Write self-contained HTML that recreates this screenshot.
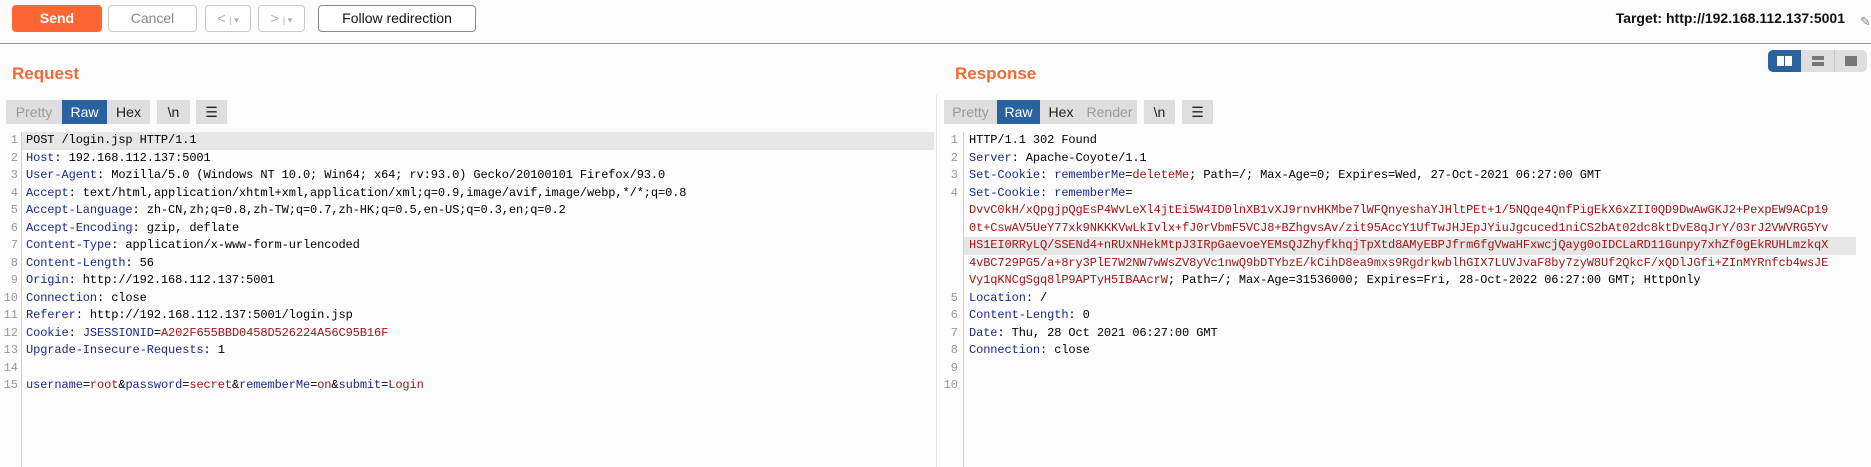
<!DOCTYPE html>
<html><head><meta charset="utf-8"><style>
*{margin:0;padding:0;box-sizing:border-box}
body{width:1871px;height:467px;background:#fcfcfc;font-family:"Liberation Sans",sans-serif;position:relative;overflow:hidden}
.abs{position:absolute}
.btn{position:absolute;top:5px;height:27px;border:1px solid #c9c9c9;border-radius:4px;background:#fff;font-size:14px;color:#888;text-align:center;line-height:25px}
.tabs{position:absolute;top:100px;height:24px;display:flex;font-size:14px}
.tabs div{background:#dedede;color:#999;line-height:24px;text-align:center}
.tabs .on{background:#2a62a0;color:#fff}
.tabs .dk{color:#222}
.code{position:absolute;top:132px;font-family:"Liberation Mono",monospace;font-size:12px;letter-spacing:-0.1px;line-height:17.5px;white-space:pre;color:#000}
.ln{position:absolute;top:132px;font-family:"Liberation Mono",monospace;font-size:12px;line-height:17.5px;white-space:pre;color:#999;text-align:right}
.k{color:#1c2a8a}.v{color:#a31515}
.hl{position:absolute;height:17.5px;background:#e6e6e6}
</style></head><body>
<div class="btn" style="left:12px;width:90px;background:#ff6633;border-color:#ff6633;color:#fff;font-weight:bold">Send</div>
<div class="btn" style="left:108px;width:89px">Cancel</div>
<div class="btn" style="left:205px;width:46px;color:#aaa">&lt; <span style="font-size:9px">| ▾</span></div>
<div class="btn" style="left:258px;width:47px;color:#aaa">&gt; <span style="font-size:9px">| ▾</span></div>
<div class="btn" style="left:318px;width:158px;border-color:#888;color:#111">Follow redirection</div>
<div class="abs" style="right:26px;top:10px;font-size:14px;font-weight:bold;color:#111">Target: http://192.168.112.137:5001</div>
<div class="abs" style="left:1860px;top:14px;font-size:13px;color:#888">✎</div>
<div class="abs" style="left:0;top:43px;width:1871px;height:1px;background:#9a9aa6"></div>
<div class="abs" style="left:1768px;top:50px;width:99px;height:22px;border-radius:5px;background:#dedede;overflow:hidden">
 <div class="abs" style="left:0;top:0;width:33px;height:22px;background:#2a62a0"></div>
 <div class="abs" style="left:9px;top:6px;width:7px;height:10px;background:#fff"></div>
 <div class="abs" style="left:17px;top:6px;width:7px;height:10px;background:#fff"></div>
 <div class="abs" style="left:66px;top:0;width:1px;height:22px;background:#c8c8c8"></div>
 <div class="abs" style="left:44px;top:6px;width:12px;height:4px;background:#777"></div>
 <div class="abs" style="left:44px;top:12px;width:12px;height:4px;background:#777"></div>
 <div class="abs" style="left:77px;top:6px;width:12px;height:10px;background:#777"></div>
</div>
<div class="abs" style="left:12px;top:64px;font-size:17px;font-weight:bold;color:#f26a36">Request</div>
<div class="abs" style="left:955px;top:64px;font-size:17px;font-weight:bold;color:#f26a36">Response</div>
<div class="tabs" style="left:6px"><div style="width:56px">Pretty</div><div class="on" style="width:45px">Raw</div><div class="dk" style="width:43px">Hex</div><div class="dk" style="width:33px;margin-left:7px">\n</div><div class="dk" style="width:31px;margin-left:6px">☰</div></div>
<div class="tabs" style="left:944px"><div style="width:53px">Pretty</div><div class="on" style="width:43px">Raw</div><div class="dk" style="width:42px">Hex</div><div style="width:55px">Render</div><div class="dk" style="width:31px;margin-left:7px">\n</div><div class="dk" style="width:31px;margin-left:7px">☰</div></div>
<div class="hl" style="left:22px;top:132px;width:912px"></div>
<div class="hl" style="left:964px;top:237px;width:892px"></div>
<div class="abs" style="left:21px;top:132px;width:1px;height:335px;background:#d0d0d0"></div>
<div class="abs" style="left:963px;top:132px;width:1px;height:335px;background:#d0d0d0"></div>
<div class="abs" style="left:936px;top:95px;width:1px;height:372px;background:#e4e4e4"></div>
<div class="ln" style="left:0;width:18px">1
2
3
4
5
6
7
8
9
10
11
12
13
14
15</div>
<div class="code" style="left:26px">POST /login.jsp HTTP/1.1
<span class="k">Host</span>: 192.168.112.137:5001
<span class="k">User-Agent</span>: Mozilla/5.0 (Windows NT 10.0; Win64; x64; rv:93.0) Gecko/20100101 Firefox/93.0
<span class="k">Accept</span>: text/html,application/xhtml+xml,application/xml;q=0.9,image/avif,image/webp,*/*;q=0.8
<span class="k">Accept-Language</span>: zh-CN,zh;q=0.8,zh-TW;q=0.7,zh-HK;q=0.5,en-US;q=0.3,en;q=0.2
<span class="k">Accept-Encoding</span>: gzip, deflate
<span class="k">Content-Type</span>: application/x-www-form-urlencoded
<span class="k">Content-Length</span>: 56
<span class="k">Origin</span>: http://192.168.112.137:5001
<span class="k">Connection</span>: close
<span class="k">Referer</span>: http://192.168.112.137:5001/login.jsp
<span class="k">Cookie</span>: <span class="k">JSESSIONID</span>=<span class="v">A202F655BBD0458D526224A56C95B16F</span>
<span class="k">Upgrade-Insecure-Requests</span>: 1

<span class="k">username</span>=<span class="v">root</span>&amp;<span class="k">password</span>=<span class="v">secret</span>&amp;<span class="k">rememberMe</span>=<span class="v">on</span>&amp;<span class="k">submit</span>=<span class="v">Login</span></div>
<div class="ln" style="left:940px;width:18px">1
2
3
4





5
6
7
8
9
10</div>
<div class="code" style="left:969px">HTTP/1.1 302 Found
<span class="k">Server</span>: Apache-Coyote/1.1
<span class="k">Set-Cookie</span>: <span class="k">rememberMe</span>=<span class="v">deleteMe</span>; Path=/; Max-Age=0; Expires=Wed, 27-Oct-2021 06:27:00 GMT
<span class="k">Set-Cookie</span>: <span class="k">rememberMe</span>=
<span class="v">DvvC0kH/xQpgjpQgEsP4WvLeXl4jtEi5W4ID0lnXB1vXJ9rnvHKMbe7lWFQnyeshaYJHltPEt+1/5NQqe4QnfPigEkX6xZII0QD9DwAwGKJ2+PexpEW9ACp19
0t+CswAV5UeY77xk9NKKKVwLkIvlx+fJ0rVbmF5VCJ8+BZhgvsAv/zit95AccY1UfTwJHJEpJYiuJgcuced1niCS2bAt02dc8ktDvE8qJrY/03rJ2VWVRG5Yv
HS1EI0RRyLQ/SSENd4+nRUxNHekMtpJ3IRpGaevoeYEMsQJZhyfkhqjTpXtd8AMyEBPJfrm6fgVwaHFxwcjQayg0oIDCLaRD11Gunpy7xhZf0gEkRUHLmzkqX
4vBC729PG5/a+8ry3PlE7W2NW7wWsZV8yVc1nwQ9bDTYbzE/kCihD8ea9mxs9RgdrkwblhGIX7LUVJvaF8by7zyW8Uf2QkcF/xQDlJGfi+ZInMYRnfcb4wsJE
Vy1qKNCgSgq8lP9APTyH5IBAAcrW</span>; Path=/; Max-Age=31536000; Expires=Fri, 28-Oct-2022 06:27:00 GMT; HttpOnly
<span class="k">Location</span>: /
<span class="k">Content-Length</span>: 0
<span class="k">Date</span>: Thu, 28 Oct 2021 06:27:00 GMT
<span class="k">Connection</span>: close</div>
</body></html>
